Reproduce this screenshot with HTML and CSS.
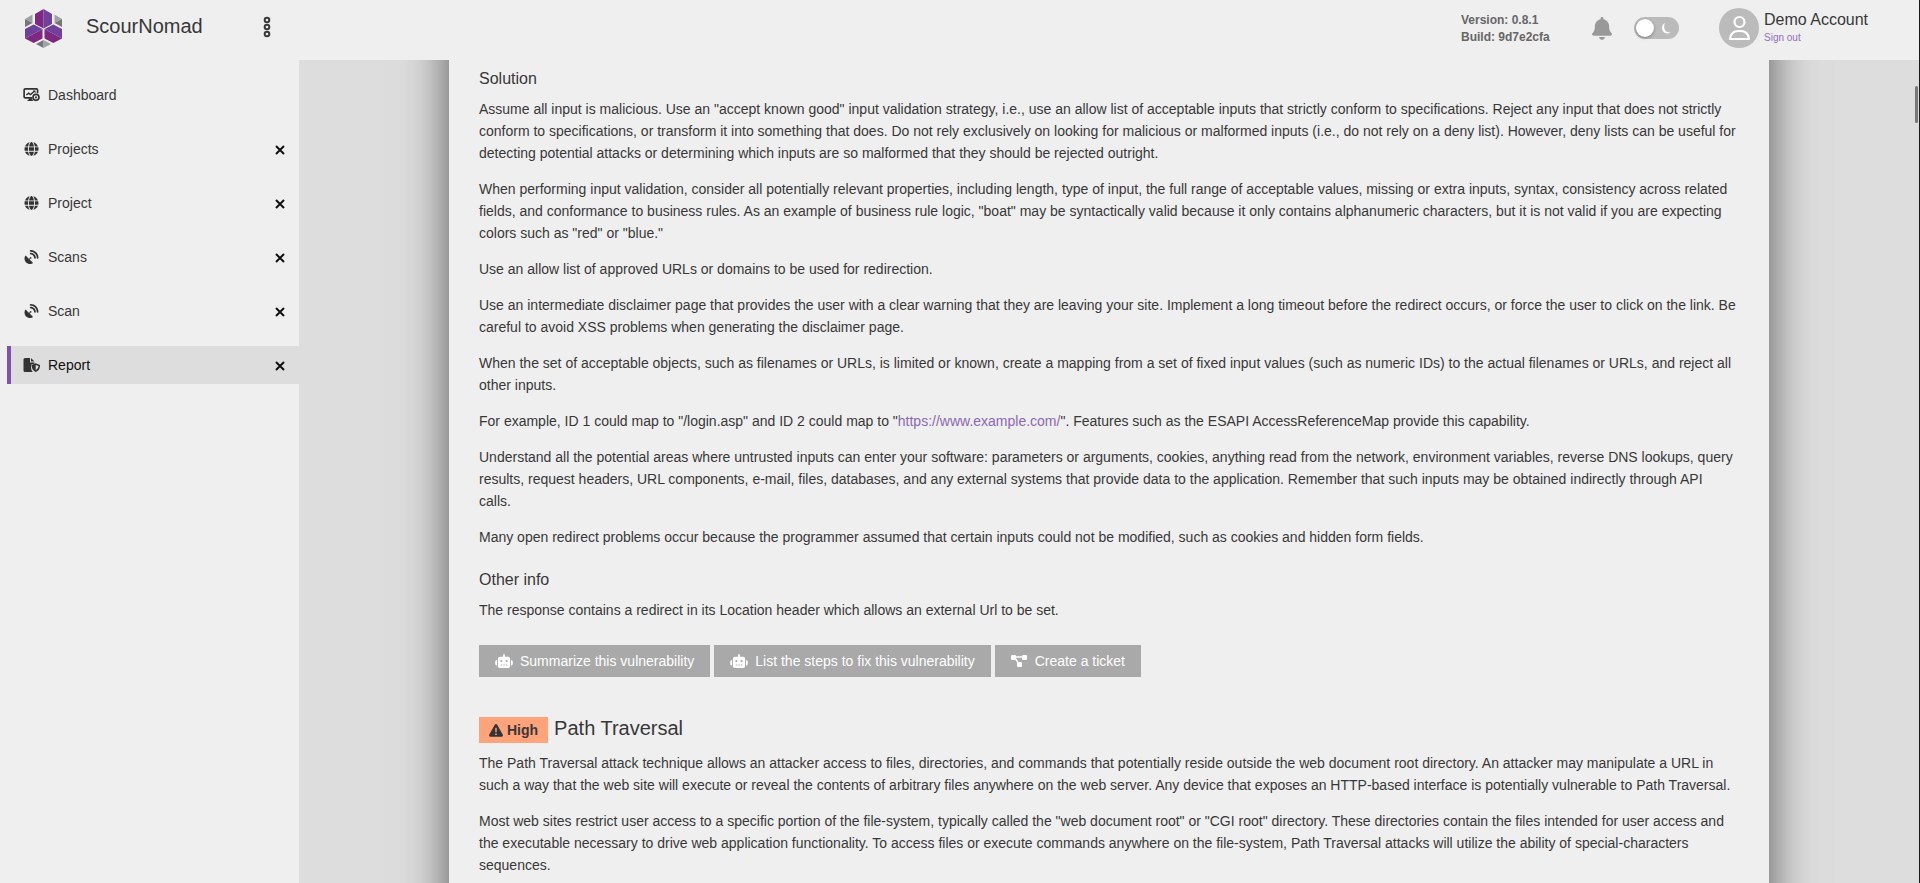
FILE: index.html
```html
<!DOCTYPE html>
<html lang="en">
<head>
<meta charset="utf-8">
<title>ScourNomad - Report</title>
<link rel="stylesheet" href="styles.css">
</head>
<body>
<svg class="symbols" aria-hidden="true">
  <symbol id="i-globe" viewBox="0 0 512 512"><path d="M352 256c0 22.200-1.200 43.600-3.300 64H163.300c-2.200-20.400-3.300-41.800-3.300-64s1.200-43.600 3.300-64h185.300c2.200 20.400 3.300 41.800 3.300 64zm28.800-64h123.100c5.300 20.500 8.100 41.900 8.100 64s-2.800 43.500-8.100 64H380.800c2.100-20.600 3.200-42 3.200-64s-1.100-43.400-3.200-64zm112.600-32H376.700c-10-63.900-29.800-117.400-55.300-151.600 78.300 20.700 142 77.500 171.900 151.600zm-149.100 0H167.700c6.100-36.400 15.500-68.600 27-94.700 10.500-23.600 22.200-40.700 33.500-51.500C239.400 3.200 248.700 0 256 0s16.600 3.200 27.800 13.800c11.300 10.800 23 27.900 33.500 51.500 11.600 26 20.900 58.200 27 94.700zm-209 0H18.600C48.600 85.900 112.200 29.100 190.600 8.400 165.100 42.600 145.300 96.100 135.300 160zM8.100 192h123.100c-2.100 20.600-3.200 42-3.200 64s1.100 43.400 3.200 64H8.100C2.800 299.500 0 278.100 0 256s2.800-43.500 8.100-64zm186.600 254.600c-11.600-26-20.900-58.200-27-94.600h176.600c-6.100 36.400-15.500 68.600-27 94.600-10.500 23.600-22.200 40.700-33.500 51.500C272.600 508.800 263.300 512 256 512s-16.600-3.200-27.800-13.800c-11.300-10.800-23-27.900-33.500-51.500zM135.300 352c10 63.900 29.800 117.400 55.300 151.600C112.200 482.900 48.600 426.100 18.600 352h116.700zm358.100 0c-30 74.100-93.600 130.900-171.900 151.600 25.500-34.200 45.200-87.700 55.300-151.600h116.600z"/></symbol>
  <symbol id="i-dish" viewBox="0 0 512 512"><path d="M192 32c0-17.700 14.300-32 32-32C383.100 0 512 128.900 512 288c0 17.700-14.300 32-32 32s-32-14.300-32-32C448 164.300 347.700 64 224 64c-17.700 0-32-14.300-32-32zM60.600 220.600 164.700 324.700l28.400-28.400c-.7-2.600-1.100-5.400-1.100-8.300 0-17.700 14.300-32 32-32s32 14.300 32 32-14.300 32-32 32c-2.900 0-5.600-.4-8.300-1.100l-28.400 28.400L291.400 451.400c14.500 14.500 11.800 38.800-7.300 46.300-28.100 11.100-58.400 17.100-90 17.100C86.100 512 0 425.900 0 319.900c0-31.700 6.100-62 17.100-90 7.500-19.100 31.800-21.800 46.300-7.300zM224 96c106 0 192 86 192 192 0 17.700-14.300 32-32 32s-32-14.300-32-32c0-70.700-57.300-128-128-128-17.700 0-32-14.300-32-32s14.300-32 32-32z"/></symbol>
  <symbol id="i-close" viewBox="0 0 10 10"><path d="M1 1l8 8M9 1L1 9" fill="none" stroke="currentColor" stroke-width="2"/></symbol>
  <symbol id="i-robot" viewBox="0 0 640 512"><path fill-rule="evenodd" d="M320 0c17.700 0 32 14.300 32 32v64h120c39.800 0 72 32.200 72 72v272c0 39.800-32.200 72-72 72H168c-39.800 0-72-32.200-72-72V168c0-39.800 32.200-72 72-72h120V32c0-17.700 14.300-32 32-32zM208 384c-8.800 0-16 7.200-16 16s7.200 16 16 16h32c8.800 0 16-7.200 16-16s-7.200-16-16-16h-32zm96 0c-8.800 0-16 7.200-16 16s7.200 16 16 16h32c8.800 0 16-7.200 16-16s-7.200-16-16-16h-32zm96 0c-8.800 0-16 7.200-16 16s7.200 16 16 16h32c8.800 0 16-7.200 16-16s-7.200-16-16-16h-32zM264 256a40 40 0 1 0-80 0 40 40 0 1 0 80 0zm152 40a40 40 0 1 0 0-80 40 40 0 1 0 0 80zM48 224h16v192H48c-26.500 0-48-21.500-48-48v-96c0-26.500 21.500-48 48-48zm544 0c26.500 0 48 21.500 48 48v96c0 26.500-21.500 48-48 48h-16V224h16z"/></symbol>
</svg>

<header class="topbar">
  <div class="brand">
    <svg class="logo" viewBox="0 0 37 39" role="img" aria-label="ScourNomad logo">
      <path fill="#9fa3a6" d="M0 10l7.500-4.500V14z"/><path fill="#77747a" d="M0 10l7.500 4L0 18z"/>
      <path fill="#9fa3a6" d="M37 10l-7.500-4.500V14z"/><path fill="#77747a" d="M37 10l-7.500 4 7.500 4z"/>
      <path fill="#77747a" d="M11 35l7.500-4v8z"/><path fill="#9fa3a6" d="M26 35l-7.500-4v8z"/>
      <path fill="#7f2881" d="M18.500 0v19.500L10 15V5z"/><path fill="#6f409c" d="M18.500 0v19.500L27 15V5z"/>
      <path fill="#7f2881" d="M17.500 20v9.500L8.700 34 0 29.500z"/><path fill="#6f409c" d="M0 20l8.700-4.500 8.800 4.500L0 29.500z"/>
      <path fill="#7f2881" d="M19.500 20v9.500l8.800 4.500 8.700-4.500z"/><path fill="#6f409c" d="M37 20l-8.700-4.500-8.800 4.500L37 29.500z"/>
    </svg>
    <span class="brand-name">ScourNomad</span>
    <button class="icon-button" type="button" aria-label="Menu">
      <svg width="8" height="22" viewBox="0 0 8 22" fill="none" stroke="#3a3a3a" stroke-width="2"><circle cx="4" cy="4" r="2.300"/><circle cx="4" cy="11" r="2.300"/><circle cx="4" cy="18" r="2.300"/></svg>
    </button>
  </div>
  <div class="tools">
    <div class="version">Version: 0.8.1<br>Build: 9d7e2cfa</div>
    <button class="icon-button bell" type="button" aria-label="Notifications">
      <svg width="20" height="23" viewBox="0 0 448 512" fill="#999"><path d="M224 0c-17.700 0-32 14.300-32 32v19.200C119 66 64 130.600 64 208v18.800c0 47-17.300 92.400-48.500 127.600l-7.400 8.300c-8.400 9.400-10.400 22.900-5.300 34.400S19.400 416 32 416h384c12.600 0 24-7.400 29.200-18.900s3.100-25-5.300-34.400l-7.400-8.300C401.300 319.200 384 273.900 384 226.800V208c0-77.400-55-142-128-156.800V32c0-17.700-14.300-32-32-32zm45.300 493.300c12-12 18.700-28.300 18.700-45.300H160c0 17 6.700 33.300 18.700 45.300S207 512 224 512s33.300-6.700 45.300-18.700z"/></svg>
    </button>
    <label class="switch">
      <input class="switch-input" type="checkbox" aria-label="Dark mode">
      <span class="knob"></span>
      <svg width="11" height="11" viewBox="0 0 11 11" fill="#fff"><path d="M5 0A5.500 5.500 0 1 0 10.500 9.500Q5 9.500 4.200 5 4 2 5 0z"/></svg>
    </label>
    <div class="account">
      <svg class="avatar" viewBox="0 0 40 40" aria-hidden="true"><circle cx="20" cy="20" r="20" fill="#bbb"/><g fill="none" stroke="#fff" stroke-width="2.200"><circle cx="20.500" cy="14" r="5"/><path d="M11 31c0-5 4-8 8-8h3c4 0 8 3 8 8z" stroke-linejoin="round"/></g></svg>
      <div class="who"><span class="user">Demo Account</span><a class="signout" href="#">Sign out</a></div>
    </div>
  </div>
</header>

<div class="body">
  <nav class="sidebar">
    <div class="item"><a class="link" href="#"><svg class="icon" viewBox="0 0 18 15"><g fill="none" stroke="currentColor" stroke-width="1.800"><path d="M9.500 10.500H2.300Q1.100 10.500 1.100 9.300V2.200Q1.100 1 2.300 1h12Q15.500 1 15.500 2.200V5.500"/><path d="M3.500 7.500l2.500-2 2 1.500 4-3.500" stroke-width="1.500"/><circle cx="13.800" cy="10" r="3.200"/></g><path d="M10.300 2.600h3v3zM6 11h3l2 3H4.500q0-1.300 1.500-1.300zM12.800 9h2v2h-2z"/></svg>Dashboard</a></div>
    <div class="item"><a class="link" href="#"><svg class="icon"><use href="#i-globe"/></svg>Projects</a><button class="icon-button" type="button" aria-label="Close Projects"><svg class="close"><use href="#i-close"/></svg></button></div>
    <div class="item"><a class="link" href="#"><svg class="icon"><use href="#i-globe"/></svg>Project</a><button class="icon-button" type="button" aria-label="Close Project"><svg class="close"><use href="#i-close"/></svg></button></div>
    <div class="item"><a class="link" href="#"><svg class="icon"><use href="#i-dish"/></svg>Scans</a><button class="icon-button" type="button" aria-label="Close Scans"><svg class="close"><use href="#i-close"/></svg></button></div>
    <div class="item"><a class="link" href="#"><svg class="icon"><use href="#i-dish"/></svg>Scan</a><button class="icon-button" type="button" aria-label="Close Scan"><svg class="close"><use href="#i-close"/></svg></button></div>
    <div class="item active"><a class="link" href="#" aria-current="page"><svg class="icon" viewBox="0 0 17 14"><path d="M2 0h5v4.500h4.500v1L8 6.800v2.700q0 2.500 1.700 4.500H2Q.5 14 .5 12.500v-11Q.5 0 2 0zM8 0l3.500 3.500H8z"/><path fill-rule="evenodd" d="M12.700 5.300L17 7.100q.2 5-4.300 6.900Q8.500 12 8.500 7.100zM12.700 6.900v5.400q2.900-1.400 2.900-4.200z"/></svg>Report</a><button class="icon-button" type="button" aria-label="Close Report"><svg class="close"><use href="#i-close"/></svg></button></div>
  </nav>

  <main class="content">
    <article class="paper">
      <h3 class="subhead">Solution</h3>
      <p class="para">Assume all input is malicious. Use an "accept known good" input validation strategy, i.e., use an allow list of acceptable inputs that strictly conform to specifications. Reject any input that does not strictly conform to specifications, or transform it into something that does. Do not rely exclusively on looking for malicious or malformed inputs (i.e., do not rely on a deny list). However, deny lists can be useful for detecting potential attacks or determining which inputs are so malformed that they should be rejected outright.</p>
      <p class="para">When performing input validation, consider all potentially relevant properties, including length, type of input, the full range of acceptable values, missing or extra inputs, syntax, consistency across related fields, and conformance to business rules. As an example of business rule logic, "boat" may be syntactically valid because it only contains alphanumeric characters, but it is not valid if you are expecting colors such as "red" or "blue."</p>
      <p class="para">Use an allow list of approved URLs or domains to be used for redirection.</p>
      <p class="para">Use an intermediate disclaimer page that provides the user with a clear warning that they are leaving your site. Implement a long timeout before the redirect occurs, or force the user to click on the link. Be careful to avoid XSS problems when generating the disclaimer page.</p>
      <p class="para">When the set of acceptable objects, such as filenames or URLs, is limited or known, create a mapping from a set of fixed input values (such as numeric IDs) to the actual filenames or URLs, and reject all other inputs.</p>
      <p class="para">For example, ID 1 could map to "/login.asp" and ID 2 could map to "<a class="text-link" href="#">https://www.example.com/</a>". Features such as the ESAPI AccessReferenceMap provide this capability.</p>
      <p class="para">Understand all the potential areas where untrusted inputs can enter your software: parameters or arguments, cookies, anything read from the network, environment variables, reverse DNS lookups, query results, request headers, URL components, e-mail, files, databases, and any external systems that provide data to the application. Remember that such inputs may be obtained indirectly through API calls.</p>
      <p class="para">Many open redirect problems occur because the programmer assumed that certain inputs could not be modified, such as cookies and hidden form fields.</p>
      <h3 class="subhead">Other info</h3>
      <p class="para">The response contains a redirect in its Location header which allows an external Url to be set.</p>
      <div class="actions">
        <button class="action" type="button"><svg class="action-icon"><use href="#i-robot"/></svg>Summarize this vulnerability</button>
        <button class="action" type="button"><svg class="action-icon"><use href="#i-robot"/></svg>List the steps to fix this vulnerability</button>
        <button class="action" type="button"><svg class="action-icon small" viewBox="0 0 16 14"><path d="M5 3h6M3.500 3.500l5 7" stroke="#fff" stroke-width="1.500"/><rect x="0" y="1" width="5" height="5" rx="1"/><rect x="11" y="1" width="5" height="5" rx="1"/><rect x="6" y="8" width="5" height="5" rx="1"/></svg>Create a ticket</button>
      </div>
      <div class="finding">
        <span class="badge"><svg width="14" height="13" viewBox="0 0 14 13"><path fill="#333" fill-rule="evenodd" d="M7 0q.7 0 1.100.6l5.700 10.200Q14.300 12.500 12.800 12.700H1.200Q-.3 12.500.2 10.800L5.900.6Q6.300 0 7 0zM6.300 3.800v4.400h1.400V3.800zM6.200 9.400V11h1.600V9.400z"/></svg>High</span>
        <h2 class="title">Path Traversal</h2>
      </div>
      <p class="para">The Path Traversal attack technique allows an attacker access to files, directories, and commands that potentially reside outside the web document root directory. An attacker may manipulate a URL in such a way that the web site will execute or reveal the contents of arbitrary files anywhere on the web server. Any device that exposes an HTTP-based interface is potentially vulnerable to Path Traversal.</p>
      <p class="para">Most web sites restrict user access to a specific portion of the file-system, typically called the "web document root" or "CGI root" directory. These directories contain the files intended for user access and the executable necessary to drive web application functionality. To access files or execute commands anywhere on the file-system, Path Traversal attacks will utilize the ability of special-characters sequences.</p>
    </article>
    <div class="scroll-thumb"></div>
  </main>
</div>
</body>
</html>
```
FILE: styles.css
```css
* { box-sizing: border-box; }

body {
  margin: 0;
  height: 100vh;
  display: flex;
  flex-direction: column;
  overflow: hidden;
  border-right: 1px solid #1a1a1a;
  background: #efefef;
  color: #383838;
  font: 14px/22px "Liberation Sans", Arial, sans-serif;
}

a { color: inherit; text-decoration: none; }
svg { display: block; flex: none; }
svg:not([fill]) { fill: currentColor; }
.symbols { position: absolute; width: 0; height: 0; }

.icon-button {
  display: flex;
  padding: 0;
  border: 0;
  background: none;
  color: #111;
}

/* Top bar */
.topbar {
  flex: none;
  display: flex;
  justify-content: space-between;
  height: 60px;
  padding: 8px 50px 12px 25px;
}
.brand { display: flex; align-items: center; width: 246px; }
.logo { width: 37px; height: 39px; }
.brand-name { flex: 1; margin-left: 24px; padding-bottom: 4px; font-size: 20px; }
.brand .icon-button { padding-bottom: 2px; }

.tools { display: flex; align-items: center; }
.version {
  width: 131px;
  padding-top: 1px;
  color: #666;
  font-size: 12px;
  font-weight: bold;
  line-height: 17px;
}
.bell { margin-right: 22px; }

.switch {
  display: flex;
  align-items: center;
  gap: 6px;
  width: 45px;
  height: 22px;
  padding: 2px;
  border-radius: 11px;
  background: #bbb;
  position: relative;
}
.switch-input { position: absolute; inset: 0; margin: 0; opacity: 0; }
.knob {
  width: 18px;
  height: 18px;
  border-radius: 50%;
  background: #fff;
  box-shadow: 0 1px 3px rgba(0, 0, 0, .35);
}

.account { display: flex; gap: 5px; margin-left: 40px; }
.avatar { width: 40px; height: 40px; }
.who { display: flex; flex-direction: column; width: 105px; }
.user { font-size: 16px; line-height: 24px; }
.signout { color: #9370b8; font-size: 10px; line-height: 12px; }

/* Sidebar */
.body { flex: 1; display: flex; min-height: 0; }
.sidebar {
  flex: none;
  display: flex;
  flex-direction: column;
  gap: 16px;
  width: 299px;
  padding: 16px 0 0 7px;
}
.item {
  display: flex;
  align-items: center;
  justify-content: space-between;
  height: 38px;
  padding-right: 14px;
  border-left: 4px solid transparent;
}
.item .icon-button { padding-top: 2px; }
.active { border-left-color: #8350b0; background: #ddd; }
.link { display: flex; align-items: center; gap: 8px; padding-left: 12px; }
.active .link { color: #111; }
.icon { width: 17px; height: 14px; color: #333; }
.close { width: 10px; height: 10px; }

/* Report */
.content {
  position: relative;
  flex: 1;
  min-width: 0;
  padding: 0 150px;
  overflow: hidden;
  background: #ddd;
}
.paper {
  min-height: calc(100% + 160px);
  margin-top: -60px;
  padding: 69px 32px 14px 30px;
  background: #efefef;
  box-shadow: 0 0 44px rgba(0, 0, 0, .62);
}
.subhead {
  margin: 0 0 9px;
  font-size: 16px;
  font-weight: normal;
  line-height: 20px;
}
.para { margin: 0 0 14px; }
.para + .subhead { margin-top: 22px; }
.text-link { color: #8c68b4; }

.actions { display: flex; flex-wrap: wrap; gap: 4px; margin-top: 24px; }
.action {
  display: flex;
  align-items: center;
  gap: 7px;
  height: 32px;
  padding: 0 16px;
  border: 0;
  background: #a9a9a9;
  color: #fff;
  font: inherit;
}
.action-icon { width: 18px; height: 14px; }
.small { width: 16px; margin-right: 1px; }

.finding { display: flex; align-items: flex-start; gap: 6px; margin: 40px 0 9px; }
.badge {
  display: flex;
  align-items: center;
  gap: 4px;
  height: 26px;
  padding: 0 10px;
  background: #ffa37b;
  font-weight: bold;
}
.title { margin: 0; font-size: 20px; font-weight: normal; line-height: 22px; }

.scroll-thumb {
  position: absolute;
  top: 26px;
  right: 1px;
  width: 3px;
  height: 37px;
  border-radius: 2px;
  background: #777;
}
```
